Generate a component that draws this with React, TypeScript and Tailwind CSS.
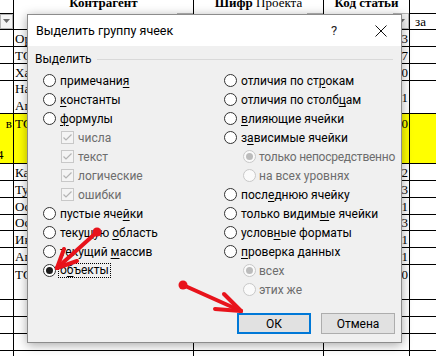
import React from 'react';

function Tri() {
  return (
    <svg width="7" height="4" viewBox="0 0 7 4">
      <path d="M0 0 L7 0 L3.5 4 Z" fill="#6b6b6b" />
    </svg>
  );
}

function FilterBtn({ w }: { w: string }) {
  return (
    <div className={`${w} h-[16px] border border-[#b5b5b5] bg-[#f4f4f4] flex items-center justify-center`}>
      <Tri />
    </div>
  );
}

function Radio({ checked, disabled }: { checked?: boolean; disabled?: boolean }) {
  return (
    <span
      className={`w-[13px] h-[13px] shrink-0 rounded-full border flex items-center justify-center ${
        disabled ? 'border-[#c8c8c8] bg-[#fafafa]' : 'border-[#333333] bg-white'
      }`}
    >
      {checked && (
        <span className={`w-[7px] h-[7px] rounded-full ${disabled ? 'bg-[#bcbcbc]' : 'bg-[#1c1c1c]'}`} />
      )}
    </span>
  );
}

function Check() {
  return (
    <span className="w-[13px] h-[13px] shrink-0 border border-[#c8c8c8] bg-[#f4f4f4] flex items-center justify-center">
      <svg width="11" height="11" viewBox="0 0 11 11">
        <path d="M1.5 5.5 L4 8 L9.5 2.5" fill="none" stroke="#b4b4b4" strokeWidth="1.2" />
      </svg>
    </span>
  );
}

function U({ children }: { children: React.ReactNode }) {
  return <span className="underline underline-offset-[2px] decoration-1">{children}</span>;
}

function RItem({ children, checked }: { children: React.ReactNode; checked?: boolean }) {
  return (
    <div className="h-[19px] flex items-center gap-[4px] whitespace-nowrap">
      <Radio checked={checked} />
      <span className="text-black">{children}</span>
    </div>
  );
}

function CItem({ children }: { children: React.ReactNode }) {
  return (
    <div className="h-[19px] flex items-center gap-[4px] pl-[18px] whitespace-nowrap">
      <Check />
      <span className="text-[#6d6d6d]">{children}</span>
    </div>
  );
}

function SItem({ children, checked, tight }: { children: React.ReactNode; checked?: boolean; tight?: boolean }) {
  return (
    <div className="h-[19px] flex items-center gap-[3px] pl-[19px] whitespace-nowrap">
      <Radio checked={checked} disabled />
      <span className={`text-[#6d6d6d] ${tight ? 'tracking-[-0.25px]' : ''}`}>{children}</span>
    </div>
  );
}

type RowData = {
  h: string;
  b: string[];
  d: string;
  yellow?: boolean;
  top?: boolean;
};

const rows: RowData[] = [
  { h: 'h-[17px]', b: ['Ор'], d: '3' },
  { h: 'h-[17px]', b: ['ТС'], d: '7' },
  { h: 'h-[17px]', b: ['Ха'], d: '0' },
  { h: 'h-[33px]', b: ['На', 'Аг'], d: '1' },
  { h: 'h-[50px]', b: ['ТС'], d: '0', yellow: true, top: true },
  { h: 'h-[17px]', b: ['Ка'], d: '2' },
  { h: 'h-[17px]', b: ['Ту'], d: '3' },
  { h: 'h-[17px]', b: ['Ос'], d: '1' },
  { h: 'h-[16px]', b: ['Ос'], d: '3' },
  { h: 'h-[17px]', b: ['Ин'], d: '1' },
  { h: 'h-[17px]', b: ['Аг'], d: '1' },
  { h: 'h-[35px]', b: ['ТС'], d: '0', top: true },
  { h: 'h-[17px]', b: [], d: '' },
  { h: 'h-[17px]', b: [], d: '' },
  { h: 'h-[17px]', b: [], d: '' },
  { h: 'h-[17px]', b: [], d: '' },
];

export default function App() {
  return (
    <div className="relative w-[436px] h-[356px] overflow-hidden bg-white">
      {/* Spreadsheet background */}
      <div className="flex flex-col font-['Liberation_Serif','Times_New_Roman',serif] text-[13px] leading-[15px] text-black">
        {/* header */}
        <div className="flex h-[30px] border-b border-black">
          <div className="w-[14px] border-r border-black flex flex-col">
            <div className="h-[14px] border-b border-black" />
            <FilterBtn w="w-[13px]" />
          </div>
          <div className="w-[180px] border-r border-black flex flex-col">
            <div className="-mt-[5px] text-center font-bold whitespace-nowrap">Контрагент</div>
            <div className="flex-1" />
            <div className="flex justify-end">
              <FilterBtn w="w-[16px]" />
            </div>
          </div>
          <div className="w-[130px] border-r border-black flex flex-col">
            <div className="-mt-[5px] text-center whitespace-nowrap">
              <span className="font-bold">Шифр</span> Проекта
            </div>
            <div className="flex-1" />
            <div className="flex justify-end">
              <FilterBtn w="w-[16px]" />
            </div>
          </div>
          <div className="w-[86px] border-r border-black flex flex-col">
            <div className="-mt-[5px] text-center font-bold whitespace-nowrap">Код статьи</div>
            <div className="flex-1" />
            <div className="flex justify-end">
              <FilterBtn w="w-[16px]" />
            </div>
          </div>
          <div className="flex-1 flex flex-col">
            <div className="h-[14px] border-b border-black" />
            <div className="flex-1 flex items-center pl-[5px]">за</div>
          </div>
        </div>
        {rows.map((r, i) => (
          <div key={i} className={`flex ${r.h} border-b border-black ${r.yellow ? 'bg-[#ffff00]' : ''}`}>
            <div className="w-[14px] border-r border-black flex flex-col justify-between overflow-hidden">
              {r.yellow && (
                <>
                  <div className="text-right pr-[1px] pt-[2px]">в</div>
                  <div className="-ml-[3px] pb-[1px]">4</div>
                </>
              )}
            </div>
            <div
              className={`w-[180px] border-r border-black flex flex-col pl-[1px] ${
                r.top ? 'justify-start pt-[2px]' : 'justify-center'
              } ${r.b.length > 1 ? 'leading-[17px]' : ''}`}
            >
              {r.b.map((t, j) => (
                <div key={j}>{t}</div>
              ))}
            </div>
            <div className="w-[130px] border-r border-black" />
            <div
              className={`w-[86px] border-r border-black flex pr-[1px] justify-end ${
                r.top ? 'items-start pt-[2px]' : 'items-center'
              }`}
            >
              {r.d}
            </div>
            <div className="flex-1" />
          </div>
        ))}
      </div>

      {/* Dialog */}
      <div className="absolute left-[27px] top-[14px] w-[375px] h-[329px] border border-[#8c8c8c] bg-[#f0f0f0] shadow-[0_2px_10px_rgba(0,0,0,0.35)] flex flex-col font-['Roboto','Noto_Sans',sans-serif] text-[12px] leading-[16px] text-black">
        <div className="h-[31px] bg-white flex items-center pl-[8px]">
          <span className="text-[12.5px]">Выделить группу ячеек</span>
          <div className="flex-1" />
          <div className="w-[54px] flex justify-center text-[13px] text-[#222]">?</div>
          <div className="w-[40px] flex justify-center">
            <svg width="12" height="12" viewBox="0 0 12 12">
              <path d="M0.5 0.5 L11.5 11.5 M11.5 0.5 L0.5 11.5" stroke="#111" strokeWidth="1" />
            </svg>
          </div>
        </div>
        <div className="flex-1 flex flex-col pl-[7px] pr-[6px]">
          <div className="h-[25px] pt-[5px]">
            <div className="h-[16px] flex items-center gap-[5px] pr-[2px]">
              <span>Выделить</span>
              <div className="flex-1 h-px bg-[#d9d9d9]" />
            </div>
          </div>
          <div className="flex pl-[8px]">
            <div className="w-[181px] shrink-0 flex flex-col">
              <RItem>
                примечани<U>я</U>
              </RItem>
              <RItem>
                <U>к</U>онстанты
              </RItem>
              <RItem>
                <U>ф</U>ормулы
              </RItem>
              <CItem>числа</CItem>
              <CItem>текст</CItem>
              <CItem>логические</CItem>
              <CItem>ошибки</CItem>
              <RItem>
                пустые яче<U>й</U>ки
              </RItem>
              <RItem>
                текущую <U>о</U>бласть
              </RItem>
              <RItem>
                текущий <U>м</U>ассив
              </RItem>
              <div className="h-[19px] flex items-center gap-[2px] whitespace-nowrap">
                <Radio checked />
                <span className="border border-dotted border-black px-[1px] leading-[13px]">
                  о<U>б</U>ъекты
                </span>
              </div>
            </div>
            <div className="flex-1 min-w-0 flex flex-col">
              <RItem>
                отличия по ст<U>р</U>окам
              </RItem>
              <RItem>
                отличия по столб<U>ц</U>ам
              </RItem>
              <RItem>
                <U>в</U>лияющие ячейки
              </RItem>
              <RItem>
                з<U>а</U>висимые ячейки
              </RItem>
              <SItem checked tight>
                только непосредственно
              </SItem>
              <SItem>на всех уровнях</SItem>
              <RItem>
                посл<U>е</U>днюю ячейку
              </RItem>
              <RItem>
                только видим<U>ы</U>е ячейки
              </RItem>
              <RItem>
                услов<U>н</U>ые форматы
              </RItem>
              <RItem>
                <U>п</U>роверка данных
              </RItem>
              <SItem checked>всех</SItem>
              <SItem>этих же</SItem>
            </div>
          </div>
          <div className="mt-[14px] flex justify-end gap-[10px]">
            <div className="w-[74px] h-[21px] border-2 border-[#0078d7] bg-[#e1e1e1] flex items-center justify-center">
              ОК
            </div>
            <div className="w-[74px] h-[21px] border border-[#adadad] bg-[#e1e1e1] flex items-center justify-center">
              Отмена
            </div>
          </div>
        </div>
      </div>

      {/* Red arrows annotation */}
      <svg className="absolute left-0 top-0 pointer-events-none" width="436" height="356" viewBox="0 0 436 356">
        <g stroke="#e8131b" strokeWidth="4" strokeLinecap="round" strokeLinejoin="round" fill="none">
          <path d="M97 232 L57 268" />
          <path d="M57 268 L64 249" />
          <path d="M57 268 L77 261" />
          <path d="M183 285 L241 311" />
          <path d="M241 311 L224 294" />
          <path d="M241 311 L215 309" />
        </g>
        <circle cx="97" cy="232" r="4.5" fill="#e8131b" />
        <circle cx="183" cy="285" r="4.5" fill="#e8131b" />
      </svg>
    </div>
  );
}
